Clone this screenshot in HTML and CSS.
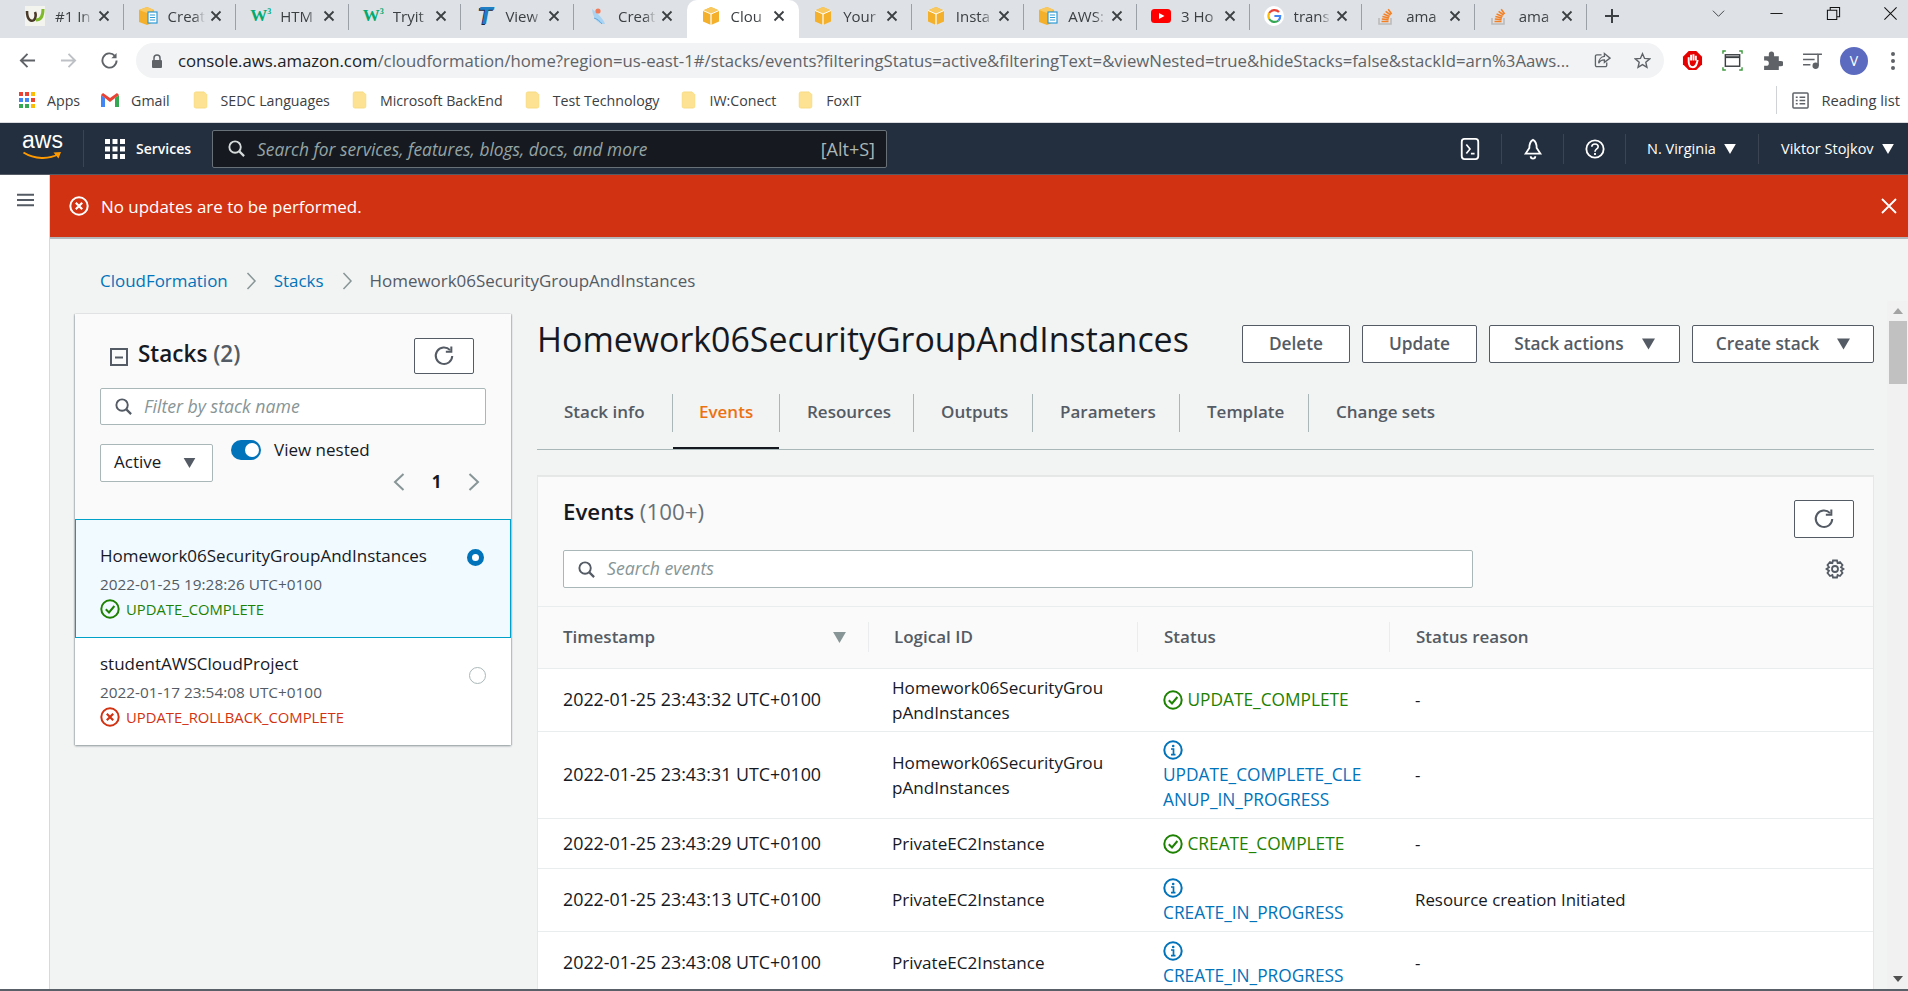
FILE: index.html
```html
<!DOCTYPE html>
<html lang="en">
<head>
<meta charset="utf-8">
<title>CloudFormation - Stack Homework06SecurityGroupAndInstances</title>
<link rel="stylesheet" href="styles.css">
</head>
<body>
<svg class="defs" width="0" height="0">
  <symbol id="cube" viewBox="0 0 20 20"><path d="M10 1 18 4.5V15.5L10 19 2 15.5V4.5Z" fill="#f4b02a"/><path d="M2 4.5 10 8 18 4.5 10 1Z" fill="#f9c95f"/><path d="M10 8V19" stroke="#fff" stroke-width="1.2"/><path d="M2 4.5 10 8 18 4.5" fill="none" stroke="#fff" stroke-width="1"/></symbol>
  <symbol id="cubedoc" viewBox="0 0 20 20"><path d="M9 1 16 4V16L9 19 1 16V4Z" fill="#f4b02a"/><path d="M1 4 9 7 16 4 9 1Z" fill="#f9c95f"/><rect x="10" y="6" width="9" height="11" fill="#fff" stroke="#2e9bd6" stroke-width="1.2"/><path d="M12 9h5M12 11.5h5M12 14h5" stroke="#2e9bd6" stroke-width="1.2"/></symbol>
  <symbol id="so" viewBox="0 0 20 20"><path d="M3 12V18H15V12" fill="none" stroke="#bcbbbb" stroke-width="1.6"/><path d="M5.5 15.5H12.5M5.8 13 12.6 13.6M6.4 10.5 13 12M7.6 8 13.6 10.4M9.6 5.4 14.6 9M12.2 3.2 15.6 8" fill="none" stroke="#f48024" stroke-width="1.6"/></symbol>
  <symbol id="close" viewBox="0 0 12 12"><path d="M1.5 1.5 10.5 10.5M10.5 1.5 1.5 10.5" stroke="#3c4043" stroke-width="1.8" fill="none"/></symbol>
  <symbol id="folder" viewBox="0 0 16 20"><path d="M1 3a2 2 0 0 1 2-2h9l3 3v13a2 2 0 0 1-2 2H3a2 2 0 0 1-2-2Z" fill="#fde293" stroke="#f6d675" stroke-width=".8"/></symbol>
  <symbol id="refresh" viewBox="0 0 24 24"><path d="M18.6 5.6A9 9 0 1 0 21 12" fill="none" stroke="#545b64" stroke-width="2.2"/><path d="M20 1.5V7.4H14" fill="none" stroke="#545b64" stroke-width="2.2"/></symbol>
  <symbol id="search" viewBox="0 0 20 20"><circle cx="8.5" cy="8.5" r="6" fill="none" stroke="currentColor" stroke-width="2"/><path d="M13 13 18 18" stroke="currentColor" stroke-width="2.4"/></symbol>
  <symbol id="ok" viewBox="0 0 20 20"><circle cx="10" cy="10" r="8.7" fill="none" stroke="#1d8102" stroke-width="2"/><path d="M5.8 10.2 9 13.4 14.4 7" fill="none" stroke="#1d8102" stroke-width="2"/></symbol>
  <symbol id="err" viewBox="0 0 20 20"><circle cx="10" cy="10" r="8.7" fill="none" stroke="currentColor" stroke-width="2"/><path d="M6.8 6.8 13.2 13.2M13.2 6.8 6.8 13.2" fill="none" stroke="currentColor" stroke-width="2.2"/></symbol>
  <symbol id="info" viewBox="0 0 20 20"><circle cx="10" cy="10" r="8.7" fill="none" stroke="#0073bb" stroke-width="2"/><path d="M8 9H10.500V14.500M8 14.700H12.500" fill="none" stroke="#0073bb" stroke-width="1.700"/><circle cx="10.200" cy="6" r="1.300" fill="#0073bb"/></symbol>
  <symbol id="caret" viewBox="0 0 14 12"><path d="M0 0H14L7 12Z" fill="currentColor"/></symbol>
</svg>

<div class="tabstrip">
  <div class="tab sep"><svg class="fav" viewBox="0 0 20 20"><rect width="20" height="20" fill="#f4f4ee"/><path d="M2 5C2 14 6 16 9 14 11 12 11 8 10 6" fill="none" stroke="#4a3a2a" stroke-width="2.6"/><path d="M11 14C16 14 18 9 18 3" fill="none" stroke="#7fb92c" stroke-width="3"/></svg><span class="tabtitle">#1 In</span><svg class="x"><use href="#close"/></svg></div>
  <div class="tab sep"><svg class="fav"><use href="#cubedoc"/></svg><span class="tabtitle">Creat</span><svg class="x"><use href="#close"/></svg></div>
  <div class="tab sep"><span class="fav w3">W<sup>3</sup></span><span class="tabtitle">HTM</span><svg class="x"><use href="#close"/></svg></div>
  <div class="tab sep"><span class="fav w3">W<sup>3</sup></span><span class="tabtitle">Tryit</span><svg class="x"><use href="#close"/></svg></div>
  <div class="tab sep"><span class="fav tee">T</span><span class="tabtitle">View</span><svg class="x"><use href="#close"/></svg></div>
  <div class="tab"><svg class="fav" viewBox="0 0 20 20"><path d="M4 3C9 7 15 12 17 18 11 19 5 13 4 3Z" fill="#a9d3f2"/><circle cx="10" cy="5" r="2.6" fill="#ef7d5b"/><path d="M6 12C9 13 12 15 14 18" stroke="#5aa6df" fill="none"/></svg><span class="tabtitle">Creat</span><svg class="x"><use href="#close"/></svg></div>
  <div class="tab active"><svg class="fav"><use href="#cube"/></svg><span class="tabtitle">Clou</span><svg class="x"><use href="#close"/></svg></div>
  <div class="tab sep"><svg class="fav"><use href="#cube"/></svg><span class="tabtitle">Your</span><svg class="x"><use href="#close"/></svg></div>
  <div class="tab sep"><svg class="fav"><use href="#cube"/></svg><span class="tabtitle">Insta</span><svg class="x"><use href="#close"/></svg></div>
  <div class="tab sep"><svg class="fav"><use href="#cubedoc"/></svg><span class="tabtitle">AWS:</span><svg class="x"><use href="#close"/></svg></div>
  <div class="tab sep"><svg class="fav" viewBox="0 0 20 20"><rect y="3" width="20" height="14" rx="3.5" fill="#f00"/><path d="M8 7 13.5 10 8 13Z" fill="#fff"/></svg><span class="tabtitle">3 Ho</span><svg class="x"><use href="#close"/></svg></div>
  <div class="tab sep"><svg class="fav" viewBox="0 0 20 20"><circle cx="10" cy="10" r="10" fill="#fff"/><path d="M15 6A6.3 6.3 0 0 0 5.2 7" fill="none" stroke="#ea4335" stroke-width="2.2"/><path d="M5.2 7A6.3 6.3 0 0 0 5.2 13" fill="none" stroke="#fbbc05" stroke-width="2.2"/><path d="M5.2 13A6.3 6.3 0 0 0 14.5 14.5" fill="none" stroke="#34a853" stroke-width="2.2"/><path d="M14.5 14.5A6.3 6.3 0 0 0 16.2 10H10.4" fill="none" stroke="#4285f4" stroke-width="2.2"/></svg><span class="tabtitle">trans</span><svg class="x"><use href="#close"/></svg></div>
  <div class="tab sep"><svg class="fav"><use href="#so"/></svg><span class="tabtitle">ama</span><svg class="x"><use href="#close"/></svg></div>
  <div class="tab sep"><svg class="fav"><use href="#so"/></svg><span class="tabtitle">ama</span><svg class="x"><use href="#close"/></svg></div>
  <svg class="newtab" viewBox="0 0 16 16"><path d="M8 1V15M1 8H15" stroke="#3c4043" stroke-width="2"/></svg>
  <div class="winctl">
    <svg class="wbtn" viewBox="0 0 16 16"><path d="M2 5 8 11 14 5" fill="none" stroke="#3c4043"/></svg>
    <svg class="wbtn" viewBox="0 0 16 16"><path d="M1.500 8H14.500" stroke="#111" stroke-width="1"/></svg>
    <svg class="wbtn" viewBox="0 0 16 16"><path d="M1.500 4.500H11.500V14.500H1.500ZM4.500 4.500V1.500H14.500V11.500H11.500" fill="none" stroke="#111" stroke-width="1.100"/></svg>
    <svg class="wbtn" viewBox="0 0 16 16"><path d="M1.500 1.500 14.500 14.500M14.500 1.500 1.500 14.500" stroke="#111" stroke-width="1.100"/></svg>
  </div>
</div>

<div class="toolbar">
  <div class="navbtns">
    <svg viewBox="0 0 18 18"><path d="M17 9H2M9 2 2 9 9 16" fill="none" stroke="#5f6368" stroke-width="2"/></svg>
    <svg viewBox="0 0 18 18"><path d="M1 9H16M9 2 16 9 9 16" fill="none" stroke="#bdc1c6" stroke-width="2"/></svg>
    <svg viewBox="0 0 18 18"><path d="M14.600 4A7.500 7.500 0 1 0 16.500 9" fill="none" stroke="#5f6368" stroke-width="2"/><path d="M16.500 1V6.500H11Z" fill="#5f6368"/></svg>
  </div>
  <div class="omnibox">
    <svg class="lock" viewBox="0 0 12 14"><path d="M3 6V4a3 3 0 0 1 6 0V6" fill="none" stroke="#5f6368" stroke-width="1.500"/><rect x="1" y="6" width="10" height="8" rx="1" fill="#5f6368"/></svg>
    <span class="url"><b>console.aws.amazon.com</b>/cloudformation/home?region=us-east-1#/stacks/events?filteringStatus=active&amp;filteringText=&amp;viewNested=true&amp;hideStacks=false&amp;stackId=arn%3Aaws...</span>
    <svg class="omni-ic" viewBox="0 0 18 18"><path d="M8 3H3a1.500 1.500 0 0 0-1.500 1.500V14A1.500 1.500 0 0 0 3 15.500h9a1.500 1.500 0 0 0 1.500-1.500V11" fill="none" stroke="#5f6368" stroke-width="1.400"/><path d="M11 1.500 17 6.500 11 11V8.300C8 8.300 6 9.500 5 12 5 8 7.500 5 11 4.700Z" fill="none" stroke="#5f6368" stroke-width="1.400"/></svg>
    <svg class="omni-ic star" viewBox="0 0 18 18"><path d="M9 1.800 11.200 6.800 16.600 7.300 12.500 10.900 13.700 16.200 9 13.400 4.300 16.200 5.500 10.900 1.400 7.300 6.800 6.800Z" fill="none" stroke="#5f6368" stroke-width="1.500"/></svg>
  </div>
  <div class="exts">
    <svg viewBox="0 0 22 22"><path d="M7 1H15L21 7V15L15 21H7L1 15V7Z" fill="#e60000"/><path d="M7 13V7.500M9.500 11V5M12 11V4.500M14.500 11V6M7 12C7 17 9 18 11.500 18 15 18 15 15 16.500 10.500" fill="none" stroke="#fff" stroke-width="2"/></svg>
    <svg viewBox="0 0 22 22"><path d="M1 4V1H4M18 1H21V4M21 18V21H18M4 21H1V18" fill="none" stroke="#3f9a3f" stroke-width="1.500"/><rect x="3.500" y="5" width="15" height="12" fill="none" stroke="#3c4043" stroke-width="1.500"/><path d="M3.500 7.500H18.500" stroke="#3c4043" stroke-width="2"/></svg>
    <svg viewBox="0 0 20 20"><path d="M2 6H6.500V4a2.500 2.500 0 0 1 5 0V6H16V10.500H18a2.500 2.500 0 0 1 0 5H16V19H2V15H4a2.500 2.500 0 0 0 0-5H2Z" fill="#5f6368"/></svg>
    <svg viewBox="0 0 20 20"><path d="M1 4H15M1 9H12M1 14H8" stroke="#5f6368" stroke-width="1.500"/><circle cx="13" cy="15" r="3" fill="#5f6368"/><path d="M15.300 15V4H19" fill="none" stroke="#5f6368" stroke-width="1.500"/></svg>
    <span class="avatar">V</span>
    <svg class="dots" viewBox="0 0 6 20"><circle cx="3" cy="3" r="2" fill="#5f6368"/><circle cx="3" cy="10" r="2" fill="#5f6368"/><circle cx="3" cy="17" r="2" fill="#5f6368"/></svg>
  </div>
</div>

<div class="bookmarks">
  <span class="bm bm-apps"><svg viewBox="0 0 16 16"><rect width="4" height="4" fill="#ea4335"/><rect x="6" width="4" height="4" fill="#ea4335"/><rect x="12" width="4" height="4" fill="#fbbc05"/><rect y="6" width="4" height="4" fill="#4285f4"/><rect x="6" y="6" width="4" height="4" fill="#4285f4"/><rect x="12" y="6" width="4" height="4" fill="#ea4335"/><rect y="12" width="4" height="4" fill="#34a853"/><rect x="6" y="12" width="4" height="4" fill="#34a853"/><rect x="12" y="12" width="4" height="4" fill="#fbbc05"/></svg>Apps</span>
  <span class="bm bm-gmail"><svg viewBox="0 0 18 14"><path d="M0 2V14H4V5Z" fill="#4285f4"/><path d="M18 2V14H14V5Z" fill="#34a853"/><path d="M0 2 9 9 18 2 16 0 9 5 2 0Z" fill="#ea4335"/></svg>Gmail</span>
  <span class="bm bm-f"><svg class="fd"><use href="#folder"/></svg>SEDC Languages</span>
  <span class="bm bm-f"><svg class="fd"><use href="#folder"/></svg>Microsoft BackEnd</span>
  <span class="bm bm-f"><svg class="fd"><use href="#folder"/></svg>Test Technology</span>
  <span class="bm bm-f"><svg class="fd"><use href="#folder"/></svg>IW:Conect</span>
  <span class="bm"><svg class="fd"><use href="#folder"/></svg>FoxIT</span>
  <span class="bm reading"><svg viewBox="0 0 18 18"><rect x="1" y="1" width="16" height="16" rx="1" fill="none" stroke="#5f6368" stroke-width="1.600"/><path d="M4 5.500H6M8 5.500H14M4 9H6M8 9H14M4 12.500H6M8 12.500H14" stroke="#5f6368" stroke-width="1.500"/></svg>Reading list</span>
</div>

<header class="awsnav">
  <div class="awslogo"><span>aws</span><svg viewBox="0 0 40 9"><path d="M1 1.500C12 8.500 27 8.500 36 3" fill="none" stroke="#ff9900" stroke-width="2"/><path d="M31 1.500 38.500 1 36 7.500Z" fill="#ff9900"/></svg></div>
  <div class="services"><svg viewBox="0 0 20 20" class="grid"><g fill="#fff"><rect width="5" height="5"/><rect x="7.500" width="5" height="5"/><rect x="15" width="5" height="5"/><rect y="7.500" width="5" height="5"/><rect x="7.500" y="7.500" width="5" height="5"/><rect x="15" y="7.500" width="5" height="5"/><rect y="15" width="5" height="5"/><rect x="7.500" y="15" width="5" height="5"/><rect x="15" y="15" width="5" height="5"/></g></svg><span>Services</span></div>
  <div class="navsearch"><svg class="sic"><use href="#search"/></svg><span class="ph">Search for services, features, blogs, docs, and more</span><span class="kbd">[Alt+S]</span></div>
  <div class="navright">
    <div class="ni ni-a"><svg viewBox="0 0 20 24"><rect x="1" y="1" width="18" height="22" rx="3" fill="none" stroke="#fff" stroke-width="2"/><path d="M6 7 10 12 6 17M11 17H15" fill="none" stroke="#fff" stroke-width="1.800"/></svg></div>
    <div class="ni ni-b"><svg viewBox="0 0 20 24"><path d="M10 2C6 4 6 8 6 11L2 17H18L14 11C14 8 14 4 10 2Z" fill="none" stroke="#fff" stroke-width="2"/><path d="M7.500 20a2.500 2.500 0 0 0 5 0" fill="none" stroke="#fff" stroke-width="2"/></svg></div>
    <div class="ni ni-c"><svg viewBox="0 0 22 22"><circle cx="11" cy="11" r="9.500" fill="none" stroke="#fff" stroke-width="2"/><path d="M7.500 8.500C7.500 4.500 14.500 4.500 14.500 8.500 14.500 11 11 11 11 14" fill="none" stroke="#fff" stroke-width="1.800"/><path d="M11 15.500V17.500" stroke="#fff" stroke-width="2"/></svg></div>
    <div class="ni-t ni-region">N. Virginia<svg class="ncaret"><use href="#caret"/></svg></div>
    <div class="ni-t ni-user">Viktor Stojkov<svg class="ncaret"><use href="#caret"/></svg></div>
  </div>
</header>

<div class="app">
  <aside class="side"><svg viewBox="0 0 18 14"><path d="M0 1.500H18M0 7H18M0 12.500H18" stroke="#545b64" stroke-width="2.200"/></svg></aside>
  <div class="main">
    <div class="banner">
      <svg class="b-ic"><use href="#err"/></svg>
      <span class="b-text">No updates are to be performed.</span>
      <svg class="b-x" viewBox="0 0 16 16"><path d="M1 1 15 15M15 1 1 15" stroke="#fff" stroke-width="1.800"/></svg>
    </div>
    <nav class="crumbs">
      <a>CloudFormation</a><svg viewBox="0 0 10 18"><path d="M1.500 1 9 9 1.500 17" fill="none" stroke="#879596" stroke-width="1.500"/></svg>
      <a>Stacks</a><svg viewBox="0 0 10 18"><path d="M1.500 1 9 9 1.500 17" fill="none" stroke="#879596" stroke-width="1.500"/></svg>
      <span>Homework06SecurityGroupAndInstances</span>
    </nav>
    <div class="split">
      <section class="stacks">
        <div class="stacks-head">
          <div class="sh-row">
            <svg class="collapse" viewBox="0 0 18 18"><rect x="1" y="1" width="16" height="16" fill="none" stroke="#545b64" stroke-width="2"/><path d="M5 9.500H13" stroke="#545b64" stroke-width="2"/></svg>
            <h2 class="sh-title">Stacks <em>(2)</em></h2>
            <button class="btn icon-btn small-r"><svg><use href="#refresh"/></svg></button>
          </div>
          <div class="field filter"><svg class="sic"><use href="#search"/></svg><span>Filter by stack name</span></div>
          <div class="sh-controls">
            <div class="select"><span>Active</span><svg class="scaret"><use href="#caret"/></svg></div>
            <div class="sh-right">
              <div class="toggle-row"><span class="toggle"></span><span>View nested</span></div>
              <div class="pager">
                <svg viewBox="0 0 12 20"><path d="M10.500 2 2 10 10.500 18" fill="none" stroke="#879596" stroke-width="2"/></svg>
                <b>1</b>
                <svg viewBox="0 0 12 20"><path d="M1.500 2 10 10 1.500 18" fill="none" stroke="#879596" stroke-width="2"/></svg>
              </div>
            </div>
          </div>
        </div>
        <div class="stack-row selected">
          <div>
            <div class="s-name">Homework06SecurityGroupAndInstances</div>
            <div class="s-date">2022-01-25 19:28:26 UTC+0100</div>
            <div class="s-status green"><svg><use href="#ok"/></svg>UPDATE_COMPLETE</div>
          </div>
          <span class="radio on"></span>
        </div>
        <div class="stack-row">
          <div>
            <div class="s-name">studentAWSCloudProject</div>
            <div class="s-date">2022-01-17 23:54:08 UTC+0100</div>
            <div class="s-status red"><svg><use href="#err"/></svg>UPDATE_ROLLBACK_COMPLETE</div>
          </div>
          <span class="radio"></span>
        </div>
      </section>

      <section class="detail">
        <div class="title-row">
          <h1>Homework06SecurityGroupAndInstances</h1>
          <div class="actions">
            <button class="btn a-del">Delete</button>
            <button class="btn a-upd">Update</button>
            <button class="btn a-act">Stack actions<svg><use href="#caret"/></svg></button>
            <button class="btn a-cre">Create stack<svg><use href="#caret"/></svg></button>
          </div>
        </div>
        <div class="tabs">
          <a class="t">Stack info</a><a class="t on">Events</a><a class="t">Resources</a><a class="t">Outputs</a><a class="t">Parameters</a><a class="t">Template</a><a class="t last">Change sets</a>
        </div>
        <div class="card">
          <div class="card-head">
            <div class="ch-top">
              <h2>Events <em>(100+)</em></h2>
              <button class="btn icon-btn"><svg><use href="#refresh"/></svg></button>
            </div>
            <div class="ch-search">
              <div class="field events-search"><svg class="sic"><use href="#search"/></svg><span>Search events</span></div>
              <svg class="gear" viewBox="0 0 20 20"><path d="M8 1.500H12L12.600 4 15 3 17.500 6 16 8.200 18.500 10 16 11.800 17.500 14 15 17 12.600 16 12 18.500H8L7.400 16 5 17 2.500 14 4 11.800 1.500 10 4 8.200 2.500 6 5 3 7.400 4Z" fill="none" stroke="#545b64" stroke-width="1.800"/><circle cx="10" cy="10" r="3" fill="none" stroke="#545b64" stroke-width="1.800"/></svg>
            </div>
          </div>
          <table class="events">
            <thead>
              <tr>
                <th class="c1"><div>Timestamp<svg><use href="#caret"/></svg></div></th>
                <th class="c2"><div>Logical ID</div></th>
                <th class="c3"><div>Status</div></th>
                <th class="c4"><div>Status reason</div></th>
              </tr>
            </thead>
            <tbody>
              <tr class="r1">
                <td class="time">2022-01-25 23:43:32 UTC+0100</td>
                <td class="lid">Homework06SecurityGrou<br>pAndInstances</td>
                <td class="green"><svg class="ic"><use href="#ok"/></svg> UPDATE_COMPLETE</td>
                <td class="why">-</td>
              </tr>
              <tr class="r2">
                <td class="time">2022-01-25 23:43:31 UTC+0100</td>
                <td class="lid">Homework06SecurityGrou<br>pAndInstances</td>
                <td class="blue"><svg class="ic"><use href="#info"/></svg><br>UPDATE_COMPLETE_CLE<br>ANUP_IN_PROGRESS</td>
                <td class="why">-</td>
              </tr>
              <tr class="r3">
                <td class="time">2022-01-25 23:43:29 UTC+0100</td>
                <td class="lid">PrivateEC2Instance</td>
                <td class="green"><svg class="ic"><use href="#ok"/></svg> CREATE_COMPLETE</td>
                <td class="why">-</td>
              </tr>
              <tr class="r1">
                <td class="time">2022-01-25 23:43:13 UTC+0100</td>
                <td class="lid">PrivateEC2Instance</td>
                <td class="blue"><svg class="ic"><use href="#info"/></svg><br>CREATE_IN_PROGRESS</td>
                <td class="why">Resource creation Initiated</td>
              </tr>
              <tr class="r1">
                <td class="time">2022-01-25 23:43:08 UTC+0100</td>
                <td class="lid">PrivateEC2Instance</td>
                <td class="blue"><svg class="ic"><use href="#info"/></svg><br>CREATE_IN_PROGRESS</td>
                <td class="why">-</td>
              </tr>
            </tbody>
          </table>
        </div>
      </section>

      <div class="scrollbar">
        <svg class="up" viewBox="0 0 10 6"><path d="M0 6 5 0 10 6Z" fill="#a3a3a3"/></svg>
        <div class="thumb"></div>
        <div class="track"></div>
        <svg class="down" viewBox="0 0 10 6"><path d="M0 0 5 6 10 0Z" fill="#505050"/></svg>
      </div>
    </div>
  </div>
</div>
<div class="baseline"></div>
</body>
</html>
```
FILE: styles.css
```css
* { box-sizing: border-box; }
html, body { margin: 0; padding: 0; }
body {
  width: 1908px; height: 991px; overflow: hidden;
  display: flex; flex-direction: column;
  font-family: "Open Sans", "Noto Sans", sans-serif;
  color: #16191f; background: #fff;
}
.defs { position: absolute; }
svg { display: block; flex: none; }
h1, h2 { margin: 0; font-weight: inherit; }
em { font-style: normal; }
button { font-family: inherit; }

/* browser chrome */
.tabstrip { flex: none; height: 38px; background: #dee1e6; display: flex; padding-left: 11px; }
.tab { position: relative; width: 112.6px; flex: none; display: flex; align-items: center; padding: 0 14px 0 14px; font-size: 15px; color: #3c4043; }
.tab.sep::after { content: ""; position: absolute; right: 0; top: 4px; height: 26px; width: 1px; background: #9aa0a6; }
.tab.active { background: #fff; border-radius: 10px 10px 0 0; height: 38px; }
.tab .fav { width: 20px; height: 20px; flex: none; margin-bottom: 6px; }
.tabtitle { flex: 1; margin: 0 5px 6px 10px; white-space: nowrap; -webkit-mask-image: linear-gradient(90deg, #000 70%, transparent 100%); mask-image: linear-gradient(90deg, #000 70%, transparent 100%); }
.tab .x { width: 12px; height: 12px; flex: none; margin-bottom: 6px; }
.w3 { color: #04aa6d; font-family: "Liberation Serif", serif; font-weight: 700; font-size: 17px; line-height: 20px; white-space: nowrap; }
.w3 sup { font-size: 8px; line-height: 0; color: #04aa6d; }
.tee { color: #1f7fc4; font-family: "Liberation Sans", sans-serif; font-style: italic; font-weight: 700; font-size: 24px; line-height: 20px; text-align: center; text-shadow: -1px 1px 0 #223; }
.newtab { width: 16px; height: 16px; margin: 8px 0 0 17px; }
.winctl { display: flex; margin-left: 91px; width: 187px; padding-top: 6px; justify-content: space-between; }
.wbtn { width: 15px; height: 15px; }

.toolbar { flex: none; height: 40px; display: flex; align-items: flex-end; }
.navbtns { width: 136px; height: 35px; display: flex; align-items: center; padding-left: 19px; gap: 24px; }
.navbtns svg { width: 17px; height: 17px; }
.omnibox { width: 1528px; height: 35px; background: #f1f3f4; border-radius: 18px; display: flex; align-items: center; padding-left: 15px; }
.lock { width: 12px; height: 14px; margin-right: 15px; }
.url { font-size: 16.75px; color: #5f6368; white-space: nowrap; width: 1416px; overflow: hidden; }
.url b { font-weight: 400; color: #202124; }
.omni-ic { width: 17px; height: 17px; margin-left: 0; }
.omni-ic.star { margin-left: 23px; }
.exts { display: flex; align-items: center; height: 35px; padding-left: 18px; width: 244px; gap: 19px; }
.exts svg { width: 21px; height: 21px; }
.avatar { width: 28px; height: 28px; margin-left: -2px; border-radius: 50%; background: #5c6bc0; color: #fff; font-size: 14px; text-align: center; line-height: 28px; flex: none; }
.exts .dots { width: 6px; height: 20px; margin-left: 3px; }

.bookmarks { flex: none; height: 45px; border-bottom: 1px solid #d9dbde; display: flex; align-items: center; padding-left: 19px; font-size: 14.2px; color: #3c4043; }
.bm { display: flex; align-items: center; gap: 13px; white-space: nowrap; }
.bm svg { width: 16px; height: 16px; }
.bm .fd { width: 15px; height: 18px; margin-left: -1px; }
.bm-apps { margin-right: 21px; gap: 12px; }
.bm-gmail { margin-right: 24px; gap: 12px; }
.bm-gmail svg { width: 18px; height: 14px; }
.bm-f { margin-right: 23px; }
.reading { position: relative; margin-left: auto; padding-right: 8px; padding-left: 16px; gap: 12px; font-size: 14.7px; }
.reading::before { content: ""; position: absolute; left: 0; top: -4px; bottom: -4px; width: 1px; background: #d0d3d6; }
.reading svg { width: 17px; height: 17px; }

/* AWS console nav */
.awsnav { flex: none; height: 52px; background: #232f3e; border-bottom: 1px solid #545b64; display: flex; align-items: center; color: #fff; position: relative; }
.awslogo { width: 84px; height: 37px; padding-left: 22px; border-right: 1px solid #3b4552; }
.awslogo span { display: block; font-family: "Liberation Sans", sans-serif; font-size: 23px; line-height: 20px; }
.awslogo svg { width: 41px; height: 9px; margin-top: 1px; }
.services { display: flex; align-items: center; gap: 11px; padding-left: 21px; width: 128px; font-size: 14px; font-weight: 600; }
.grid { width: 20px; height: 20px; }
.navsearch { width: 675px; height: 38px; background: #16191f; border: 1px solid #687078; border-radius: 2px; display: flex; align-items: center; padding: 0 11px 0 14px; font-size: 17.35px; color: #aab7b8; }
.navsearch .sic { width: 19px; height: 19px; color: #d5dbdb; }
.ph { font-style: italic; margin-left: 11px; color: #95a5a6; }
.kbd { margin-left: auto; color: #aab7b8; font-size: 18px; }
.navright { margin-left: auto; display: flex; align-items: center; height: 30px; }
.ni { height: 30px; width: 62px; display: flex; align-items: center; justify-content: center; border-right: 1px solid #3b4552; }
.ni svg { width: 20px; height: 22px; }
.ni-a { width: 63px; }
.ni-t { height: 30px; display: flex; align-items: center; font-size: 14.5px; font-weight: 500; white-space: nowrap; }
.ni-region { width: 133px; padding-left: 21px; border-right: 1px solid #3b4552; gap: 8px; }
.ni-user { width: 149px; padding-left: 22px; gap: 8px; }
.ncaret { width: 12px; height: 10px; }

/* app frame */
.app { flex: 1; min-height: 0; display: flex; }
.side { flex: none; width: 50px; background: #fff; border-right: 1px solid #d5dbdb; padding: 18px 0 0 17px; }
.side svg { width: 17px; height: 14px; }
.main { flex: 1; min-width: 0; display: flex; flex-direction: column; background: #f2f3f3; }
.banner { flex: none; height: 64px; background: #d13212; border-bottom: 2px solid #b4b8bb; display: flex; align-items: center; padding: 0 11px 0 19px; color: #fff; font-size: 16.95px; font-weight: 500; }
.b-ic { width: 20px; height: 20px; color: #fff; }
.b-text { margin-left: 12px; }
.b-x { width: 16px; height: 16px; margin-left: auto; }
.crumbs { flex: none; height: 62px; padding: 21px 0 0 50px; display: flex; align-items: center; font-size: 16.95px; line-height: 22px; color: #545b64; }
.crumbs a { color: #0073bb; }
.crumbs svg { width: 12px; height: 18px; margin: 0 17px 0 17px; }

.split { flex: 1; min-height: 0; display: flex; padding-left: 25px; }
.stacks { flex: none; width: 436px; margin-top: 13px; align-self: flex-start; background: #fff; box-shadow: 0 1px 2px rgba(0,28,36,.4), 1px 0 1px rgba(0,28,36,.12), -1px 0 1px rgba(0,28,36,.12); }
.stacks-head { height: 205px; background: #fafafa; padding: 24px 25px 0; }
.sh-row { display: flex; align-items: center; height: 36px; }
.collapse { width: 18px; height: 18px; margin: 1px 0 0 10px; }
.sh-title { margin: 0 0 5px 10px; font-size: 22.5px; font-weight: 600; }
.sh-title em { color: #545b64; }
.small-r { margin-left: auto; margin-right: 12px; }
.btn { background: #fff; border: 1px solid #545b64; border-radius: 2px; height: 38px; padding: 0 0 2px; font-size: 17.3px; font-weight: 600; color: #545b64; display: flex; align-items: center; justify-content: center; }
.icon-btn { width: 60px; padding: 0; }
.small-r { height: 36px; }
.icon-btn svg { width: 22px; height: 22px; }
.field { background: #fff; border: 1px solid #aab7b8; border-radius: 2px; display: flex; align-items: center; font-style: italic; color: #879596; }
.field .sic { color: #545b64; width: 19px; height: 19px; font-style: normal; }
.field span { padding-bottom: 2px; }
.filter { height: 37px; margin-top: 14px; width: 386px; padding-left: 13px; font-size: 17.7px; }
.filter span { margin-left: 11px; }
.sh-controls { display: flex; margin-top: 15px; }
.select { width: 113px; height: 38px; margin-top: 4px; background: #fff; border: 1px solid #aab7b8; border-radius: 2px; display: flex; align-items: center; padding: 0 16px 0 13px; justify-content: space-between; font-size: 17px; }
.select span { padding-bottom: 3px; }
.scaret { width: 13px; height: 10px; color: #545b64; }
.sh-right { flex: 1; margin-left: 18px; }
.toggle-row { display: flex; align-items: center; height: 20px; gap: 13px; font-size: 17px; }
.toggle-row span:last-child { padding-bottom: 2px; }
.toggle { position: relative; width: 30px; height: 20px; border-radius: 10px; background: #0073bb; flex: none; }
.toggle::after { content: ""; position: absolute; right: 2px; top: 3px; width: 14px; height: 14px; border-radius: 50%; background: #fff; }
.pager { display: flex; align-items: center; margin-top: 10px; padding-left: 162px; font-size: 17px; }
.pager svg { width: 12px; height: 20px; }
.pager b { width: 63px; text-align: center; font-weight: 700; }

.stack-row { display: flex; justify-content: space-between; padding: 14px 25px 0; height: 107px; }
.stack-row.selected { height: 119px; padding: 24px 25px 0 24px; border: 1px solid #00a1c9; background: #f1faff; }
.s-name { font-size: 17px; line-height: 24px; }
.s-date { font-size: 15.35px; line-height: 24px; margin-top: 4px; color: #545b64; }
.s-status { display: flex; align-items: center; gap: 6px; font-size: 14.8px; line-height: 22px; margin-top: 2px; }
.s-status svg { width: 20px; height: 20px; }
.green { color: #1d8102; }
.red { color: #d13212; }
.blue { color: #0073bb; }
.radio { width: 17px; height: 17px; border: 1.5px solid #aab7b8; border-radius: 50%; background: #fff; margin-top: 15px; }
.radio.on { border: 5px solid #0073bb; margin-top: 5px; margin-right: 1px; }

.detail { flex: none; width: 1337px; margin-left: 26px; min-height: 0; overflow: hidden; display: flex; flex-direction: column; }
.title-row { flex: none; display: flex; align-items: center; justify-content: space-between; padding-top: 24px; height: 62px; }
.title-row h1 { font-size: 33.9px; line-height: 38px; font-weight: 400; white-space: nowrap; margin-bottom: 10px; }
.actions { display: flex; gap: 12px; }
.actions .btn svg { width: 13px; height: 12px; margin-top: 2px; }
.a-del { width: 108px; }
.a-upd { width: 115px; }
.a-act { width: 191px; gap: 18px; }
.a-cre { width: 182px; gap: 18px; }
.tabs { flex: none; margin-top: 31px; height: 56px; border-bottom: 1px solid #aab7b8; display: grid; grid-template-columns: 136px 107px 134px 119px 147px 129px 1fr; font-size: 17px; font-weight: 600; color: #545b64; }
.t { position: relative; height: 38px; line-height: 36px; padding-left: 27px; border-right: 1px solid #aab7b8; white-space: nowrap; }
.t.last { border-right: 0; }
.t.on { color: #ec7211; padding-left: 26px; }
.t.on::after { content: ""; position: absolute; left: 0; right: 0; bottom: -17px; height: 2px; background: #16191f; }
.card { flex: 1; min-height: 0; margin-top: 26px; background: #fff; border: 1px solid #e6e8e8; border-bottom: 0; box-shadow: 0 0 1px rgba(0,28,36,.3); }
.card-head { height: 130px; background: #fafafa; border-bottom: 1px solid #eaeded; padding: 23px 19px 0 25px; }
.ch-top { display: flex; justify-content: space-between; height: 38px; }
.ch-top h2 { font-size: 22.3px; font-weight: 600; line-height: 24px; }
.ch-top em { font-weight: 400; color: #687078; }
.ch-search { display: flex; align-items: center; justify-content: space-between; margin-top: 12px; padding-right: 9px; }
.events-search { width: 910px; height: 38px; padding-left: 13px; font-size: 17.7px; }
.events-search span { margin-left: 11px; }
.gear { width: 20px; height: 20px; }
.events { width: 100%; border-collapse: collapse; table-layout: fixed; font-size: 17.6px; line-height: 25px; }
.events th { height: 61px; background: #fafafa; border-bottom: 1px solid #eaeded; font-weight: 600; font-size: 17px; color: #545b64; padding: 0; text-align: left; }
.events th div { height: 30px; line-height: 30px; padding-left: 26px; border-left: 1px solid #eaeded; display: flex; align-items: center; justify-content: space-between; padding-right: 22px; }
.events th.c1 { width: 330px; }
.events th.c1 div { border-left: 0; padding-left: 25px; }
.events th.c2 { width: 269px; }
.events th.c2 div { padding-left: 25px; }
.events th.c3 { width: 252px; }
.events th svg { width: 13px; height: 11px; color: #879596; }
.events td { padding: 0 0 0 26px; border-bottom: 1px solid #eaeded; vertical-align: middle; white-space: nowrap; overflow: hidden; color: #16191f; }
.events td.time { padding-left: 25px; font-size: 17.85px; }
.events td.lid { padding-left: 24px; font-size: 17.1px; }
.events td.why { font-size: 16.85px; }
.events td.green { color: #1d8102; font-size: 17.3px; }
.events td.blue { color: #0073bb; font-size: 17.3px; }
.r1 td { height: 63px; }
.r2 td { height: 87px; }
.r3 td { height: 50px; }
.ic { display: inline-block; width: 20px; height: 20px; vertical-align: -4px; }

.scrollbar { flex: none; width: 21px; margin-left: 13px; background: #f1f1f1; display: flex; flex-direction: column; align-items: center; }
.scrollbar .up { width: 10px; height: 6px; margin-top: 7px; }
.thumb { width: 18px; height: 63px; margin-top: 7px; background: #c1c1c1; }
.track { flex: 1; }
.scrollbar .down { width: 10px; height: 6px; margin-bottom: 7px; }
.baseline { flex: none; height: 2px; background: #5a6068; }
```
